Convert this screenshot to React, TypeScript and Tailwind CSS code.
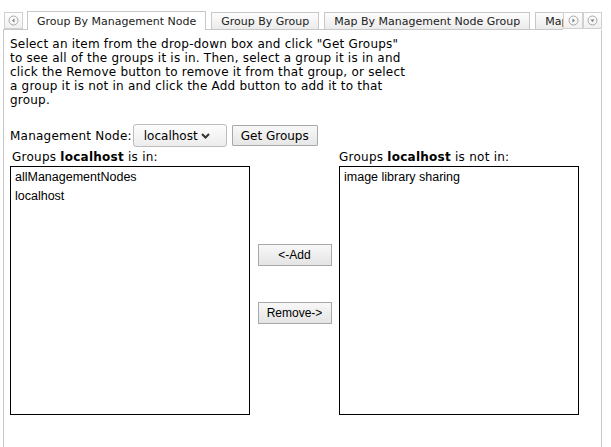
import React from 'react';
import clsx from 'clsx';

const tabs = ['Group By Management Node', 'Group By Group', 'Map By Management Node Group', 'Map By Group'];
const inGroups = ['allManagementNodes', 'localhost'];
const notInGroups = ['image library sharing'];

const ScrollBtn = ({ dir, className }: { dir: 'left' | 'right' | 'down'; className?: string }) => {
  const d =
    dir === 'left' ? 'M6.5 3.5v4l-2.5-2z' : dir === 'right' ? 'M4.5 3.5v4l2.5-2z' : 'M3.5 4.5h4l-2 2.5z';
  return (
    <div
      className={clsx(
        'flex h-[17px] shrink-0 items-center justify-center border border-[#d0d0d0] bg-gradient-to-b from-white to-[#f0f0f0]',
        className,
      )}
    >
      <svg width="11" height="11" viewBox="0 0 11 11">
        <circle cx="5.5" cy="5.5" r="4.5" fill="none" stroke="#a8a8a8" />
        <path d={d} fill="#7a7a7a" />
      </svg>
    </div>
  );
};

const ListBox = ({ items }: { items: string[] }) => (
  <div className="h-[249px] w-[240px] border border-black bg-white pl-[4px] pt-[3px] font-['Liberation_Sans',Arial,sans-serif] text-[12.5px] leading-[14px] text-black">
    {items.map((it) => (
      <div key={it} className="mb-[5px] whitespace-nowrap">
        {it}
      </div>
    ))}
  </div>
);

const MoveBtn = ({ label, className }: { label: string; className?: string }) => (
  <button
    className={clsx(
      'h-[22px] w-[74px] border border-[#a8a8a8] bg-gradient-to-b from-[#f8f8f8] to-[#e4e4e4] font-[\'Liberation_Sans\',Arial,sans-serif] text-[12px] text-black',
      className,
    )}
  >
    {label}
  </button>
);

export default function App() {
  return (
    <div className="h-[447px] w-[611px] overflow-hidden bg-white pl-[3px] pt-[11px] font-['DejaVu_Sans',sans-serif] text-[12px] text-[#111]">
      <div className="flex w-[599px]">
        <div className="flex w-[560px] flex-col overflow-hidden">
          <div className="-mb-px flex h-[19px] items-start">
            <ScrollBtn dir="left" className="ml-[1px] mt-[1px] w-[19px]" />
            <div className="ml-[4px] flex shrink-0 items-start gap-[5px] text-[11px] text-[#222]">
              {tabs.map((t, i) =>
                i === 0 ? (
                  <div
                    key={t}
                    className="relative z-10 flex h-[19px] shrink-0 items-center whitespace-nowrap border-x border-t border-[#c8c8c8] bg-white px-[9px] pt-[1px] leading-[13px]"
                  >
                    {t}
                  </div>
                ) : (
                  <div
                    key={t}
                    className="mt-[1px] flex h-[17px] shrink-0 items-center whitespace-nowrap border-x border-t border-[#c8c8c8] bg-gradient-to-b from-[#fdfdfd] to-[#ebebeb] px-[9px] leading-[13px]"
                  >
                    {t}
                  </div>
                ),
              )}
            </div>
          </div>
          <div className="h-px bg-[#c8c8c8]" />
        </div>
        <ScrollBtn dir="right" className="mt-[1px] w-[20px]" />
        <ScrollBtn dir="down" className="mt-[1px] w-[19px]" />
      </div>

      <div className="h-[430px] w-[599px] border-x border-b border-[#c8c8c8] pl-[6px] pt-[7px]">
        <p className="leading-[14px] tracking-[0.22px] text-black">
          Select an item from the drop-down box and click "Get Groups"
          <br />
          to see all of the groups it is in. Then, select a group it is in and
          <br />
          click the Remove button to remove it from that group, or select
          <br />
          a group it is not in and click the Add button to add it to that
          <br />
          group.
        </p>

        <div className="mt-[17px] flex h-[23px] items-center text-black">
          <span className="leading-[14px] tracking-[0.22px]">Management Node:</span>
          <div className="ml-[1px] flex h-[23px] w-[94px] items-center rounded-[3px] border border-[#bdbdbd] bg-gradient-to-b from-[#fdfdfd] to-[#ececec] pl-[10px]">
            <span className="leading-[14px]">localhost</span>
            <svg width="9" height="6" viewBox="0 0 9 6" className="ml-[3px]">
              <path d="M1 1l3.5 3.5L8 1" fill="none" stroke="#333" strokeWidth="2" />
            </svg>
          </div>
          <button className="ml-[5px] h-[21px] rounded-[1px] border border-[#a8a8a8] bg-gradient-to-b from-[#f8f8f8] to-[#e6e6e6] px-[8px] leading-[14px] text-black">
            Get Groups
          </button>
        </div>

        <div className="mt-[3px] flex text-black">
          <div className="flex flex-col">
            <div className="mb-[2px] pl-[2px] leading-[14px] tracking-[0.25px]">
              Groups <b>localhost</b> is in:
            </div>
            <ListBox items={inGroups} />
          </div>
          <div className="flex w-[89px] flex-col items-center pt-[94px]">
            <MoveBtn label="<-Add" />
            <MoveBtn label="Remove->" className="mt-[36px]" />
          </div>
          <div className="flex flex-col">
            <div className="mb-[2px] leading-[14px] tracking-[0.25px]">
              Groups <b>localhost</b> is not in:
            </div>
            <ListBox items={notInGroups} />
          </div>
        </div>
      </div>
    </div>
  );
}
